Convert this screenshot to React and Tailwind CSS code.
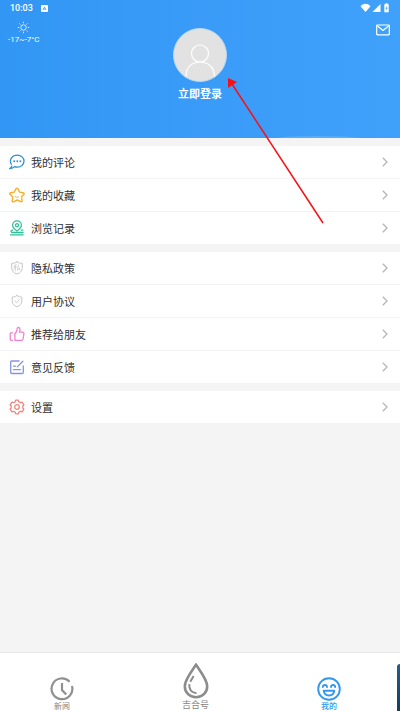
const menuGroups = [
    [
        { id: "comments", label: "我的评论", icon: CommentIcon },
        { id: "favorites", label: "我的收藏", icon: StarIcon },
        { id: "history", label: "浏览记录", icon: HistoryIcon },
    ],
    [
        { id: "privacy", label: "隐私政策", icon: PrivacyIcon },
        { id: "agreement", label: "用户协议", icon: AgreementIcon },
        { id: "recommend", label: "推荐给朋友", icon: ThumbIcon },
        { id: "feedback", label: "意见反馈", icon: FeedbackIcon },
    ],
    [{ id: "settings", label: "设置", icon: SettingsIcon }],
];

function CommentIcon() {
    return (
        <svg width="16" height="16" viewBox="0 0 16 16" fill="none" stroke="#2f8fd0" strokeWidth="1.300" strokeLinecap="round">
            <path d="M2.300 10.200C-.2 5.400 3.300 1.200 8.300 1.200c3.800 0 6.700 2.500 6.700 5.900s-2.900 6-6.700 6c-1 0-1.900-.2-2.700-.5C4.300 13.900 2.600 14.500 1 14.600c.9-.8 1.500-1.600 1.800-2.500" />
            <path d="M5.200 7.200h.01M8.300 7.200h.01M11.400 7.200h.01" strokeWidth="1.900" />
        </svg>
    );
}

function StarIcon() {
    return (
        <svg width="16" height="16" viewBox="0 0 16 16" fill="none" stroke="#f9ae2b" strokeWidth="1.400" strokeLinecap="round" strokeLinejoin="round">
            <path d="M12.700 11.200l.4 2.500c.1.900-.5 1.300-1.200 1L8.200 13l-3.700 1.800c-.9.300-1.400-.2-1.300-1l.6-3.800L1 7.300c-.5-.7-.3-1.300.5-1.500l3.700-.7 1.900-3.400c.5-.8 1.300-.8 1.700 0l1.800 3.400 3.700.7c.9.200 1.100.9.600 1.500L12.600 9.700" />
            <path d="M6 9.300c.8 1.200 2.300 1.400 3.500.6" strokeWidth="1" />
        </svg>
    );
}

function HistoryIcon() {
    return (
        <svg width="16" height="16" viewBox="0 0 16 16" fill="none" stroke="#31bd98" strokeWidth="1.300" strokeLinecap="round">
            <path d="M8 11C5 8.800 3.600 7.300 3.600 5.300a4.400 4.400 0 0 1 8.800 0C12.400 7.300 11 8.800 8 11z" />
            <circle cx="8" cy="5.200" r="1.500" />
            <path d="M3.800 10.100c-1 0-1.800.4-1.800 1.200s.8 1.200 1.800 1.200H14M1.500 14.800h12.600" />
            <path d="M12.200 10.200h1.600" />
        </svg>
    );
}

function PrivacyIcon() {
    return (
        <svg width="16" height="16" viewBox="0 0 16 16" fill="none" stroke="#c6c6c6" strokeWidth="1" strokeLinecap="round">
            <path d="M8 1.800c1.600 1.200 3.300 1.600 5.300 1.500v4.400c0 3.200-2 5.300-5.300 6.400-3.300-1.100-5.300-3.200-5.300-6.400V3.300c2 .1 3.700-.3 5.300-1.500z" />
            <path d="M7.400 4.800l-2 .6M4.900 6.900h2.600M6.300 5.300v5.700M6.200 7.300L4.900 9.200M9.500 5L8.400 9.900l2.200-.4M10 7.600l.8 2.200" strokeWidth=".7" />
        </svg>
    );
}

function AgreementIcon() {
    return (
        <svg width="16" height="16" viewBox="0 0 16 16" fill="none" stroke="#c9c9c9" strokeWidth="1" strokeLinecap="round" strokeLinejoin="round">
            <path d="M8 2.500c1.500 1.100 3 1.500 4.800 1.500v4c0 2.900-1.800 4.800-4.800 5.700C5 12.800 3.200 10.900 3.200 8V4C5 4 6.500 3.600 8 2.500z" />
            <path d="M5.900 8.200l1.600 1.500 2.800-3" />
        </svg>
    );
}

function ThumbIcon() {
    return (
        <svg width="16" height="16" viewBox="0 0 16 16" fill="none" stroke="#f57fd0" strokeWidth="1.300" strokeLinecap="round" strokeLinejoin="round">
            <path d="M3.600 6.800H2.200c-.6 0-1 .4-1 1v5.500c0 .6.4 1 1 1h1.400" />
            <path d="M5.900 14.300V7.600c1.400-.9 2.200-2.400 2.200-4.600 0-2.200 2.900-2 2.900.5 0 .9-.2 1.800-.5 2.700h3c1 0 1.600.7 1.400 1.700l-.9 5c-.2.900-.8 1.400-1.600 1.400H5.900" />
        </svg>
    );
}

function FeedbackIcon() {
    return (
        <svg width="16" height="16" viewBox="0 0 16 16" fill="none" stroke="#8794dc" strokeWidth="1.300" strokeLinecap="round" strokeLinejoin="round">
            <path d="M10 2H2.700c-.6 0-1 .4-1 1v10.500c0 .6.4 1 1 1h10.600c.6 0 1-.4 1-1V7" />
            <path d="M13.900 2.200L8.300 7.900M4.500 7.200h2M4.500 10.700h7" />
        </svg>
    );
}

function SettingsIcon() {
    return (
        <svg width="16" height="16" viewBox="0 0 16 16" fill="none" stroke="#f1857d" strokeWidth="1.300" strokeLinejoin="round">
            <path d="M6.300 2.700l.4-1.500h2.600l.4 1.500 1.700 1 1.600-.5 1.900 2.600L13.800 7v2l1.100 1.200-1.900 2.600-1.600-.5-1.700 1-.4 1.500H6.700l-.4-1.500-1.700-1-1.600.5-1.900-2.600L2.200 9V7L1.100 5.800 3 3.200l1.600.5z" />
            <circle cx="8" cy="8" r="2.300" />
        </svg>
    );
}

function StatusBar() {
    return (
        <div className="flex h-4 items-center justify-between px-[10px]">
            <div className="flex items-center gap-2">
                <span className="font-[Roboto,sans-serif] text-[9px] font-medium leading-4">
                    10:03
                </span>
                <svg width="7" height="7" viewBox="0 0 7 7">
                    <rect width="7" height="7" rx="1" fill="#fff" />
                    <path d="M2 5l1.500-3L5 5M2.500 4h2" fill="none" stroke="#3b98f2" strokeWidth=".8" />
                </svg>
            </div>
            <svg width="30" height="10" viewBox="0 0 30 10" fill="#fff">
                <path d="M.5 3.200C3.400-.1 7.600-.1 10.500 3.200L5.500 9z" />
                <path d="M20.500 1v8h-8z" />
                <path fillRule="evenodd" d="M25.500.2h2v1h1.200v8h-4.400v-8h1.200zM27 3l-1.700 2.600h1L26 7.600l1.700-2.800h-1z" />
            </svg>
        </div>
    );
}

function ProfileHeader() {
    return (
        <header className="relative h-[138px] overflow-hidden bg-linear-to-r from-[#3296f4] to-[#40a1fb] text-white">
            <StatusBar />
            <div className="grid grid-cols-3 items-start">
                <div className="flex flex-col items-start pl-2 pt-[5px]">
                    <svg className="ml-[9px]" width="13" height="13" viewBox="0 0 13 13" fill="none" stroke="#d6ebff" strokeWidth="1">
                        <circle cx="6.500" cy="6.500" r="2.700" />
                        <path d="M6.500.8v1.500M6.500 10.700v1.500M.8 6.500h1.500M10.700 6.500h1.500M2.500 2.500l1 1M9.500 9.500l1 1M10.500 2.500l-1 1M3.500 9.500l-1 1" />
                    </svg>
                    <span className="font-[Roboto,sans-serif] text-[8px] leading-3">
                        -17~-7°C
                    </span>
                </div>
                <button type="button" className="flex flex-col items-center pt-3">
                    <svg width="54" height="54" viewBox="0 0 54 54" fill="none" stroke="#fff" strokeWidth="1.200">
                        <circle cx="27" cy="27" r="26.500" fill="#e2e2e2" stroke="#b9d6f0" strokeWidth="1" />
                        <circle cx="27" cy="25.500" r="8.500" />
                        <path d="M13 48.500C13 39 19 34 27 34s14.500 5 14.500 14.500" />
                    </svg>
                    <span className="text-[11px] font-bold leading-[22px]">立即登录</span>
                </button>
                <button type="button" aria-label="消息" className="justify-self-end pr-[10px] pt-2">
                    <svg width="14" height="12" viewBox="0 0 14 12" fill="none" stroke="#fff" strokeWidth="1.200" strokeLinejoin="round">
                        <rect x=".7" y="1" width="12.600" height="9.800" rx=".5" />
                        <path d="M1.500 2L7 6.500 12.500 2" />
                    </svg>
                </button>
            </div>
            <div className="absolute -bottom-[6px] left-[67%] h-2 w-1/4 rounded-[50%] bg-white/15" />
        </header>
    );
}

function MenuRow({ item }) {
    const Icon = item.icon;

    return (
        <li>
            <a href={`#${item.id}`} className="flex h-8 items-center gap-[6px] pl-[9px] pr-3">
                <Icon />
                <span className="flex-1 text-[11px] leading-4 text-[#303030]">
                    {item.label}
                </span>
                <svg width="6" height="10" viewBox="0 0 6 10" fill="none" stroke="#b5b5b5" strokeWidth="1.300">
                    <path d="M.8.800L5 5 .8 9.200" />
                </svg>
            </a>
        </li>
    );
}

function TabBar() {
    return (
        <nav className="relative flex h-[59px] items-end justify-between overflow-hidden border-t border-[#e6e6e6] bg-white pl-[22px] pr-[31px] text-[#858585]">
            <a href="#news" className="flex w-20 flex-col items-center">
                <svg width="24" height="24" viewBox="0 0 24 24" fill="none" stroke="#909090" strokeWidth="2.200">
                    <path d="M19.600 4.700A10.400 10.400 0 1 0 22 9" />
                    <path d="M12 6v7l4.200 4.500" />
                </svg>
                <span className="text-[8px] leading-[10px]">新闻</span>
            </a>
            <a href="#jihe" className="flex w-20 flex-col items-center">
                <svg width="26" height="36" viewBox="0 0 26 36" fill="none" stroke="#8c8c8c" strokeWidth="2.600">
                    <path d="M13 1.800C8.500 8.500 1.800 17 1.800 23.200 1.800 29.800 6.800 34.200 13 34.200s11.200-4.400 11.200-11C24.200 17 17.500 8.500 13 1.800z" />
                    <path d="M10.600 13L7.300 18.800M6.300 21.200c-.4 5.200 2.200 8.500 7.200 9" strokeWidth="2" />
                </svg>
                <span className="text-[9px] leading-3">吉合号</span>
            </a>
            <a href="#mine" aria-current="page" className="flex w-20 flex-col items-center text-[#3298ee]">
                <svg width="24" height="24" viewBox="0 0 24 24" fill="none" stroke="#3298ee" strokeWidth="1.900" strokeLinecap="round" strokeLinejoin="round">
                    <circle cx="12" cy="12" r="10.800" />
                    <path d="M5.800 10c.3-2.700 3.900-2.700 4.200 0M14 10c.3-2.700 3.900-2.700 4.200 0" />
                    <path d="M6.700 13.700h10.600c-.4 3.100-2.400 4.800-5.300 4.800s-4.900-1.700-5.300-4.800z" />
                </svg>
                <span className="text-[8px] font-medium leading-[10px]">我的</span>
            </a>
            {/* edge of the floating widget */}
            <div className="absolute bottom-0 right-0 h-[47px] w-[3px] rounded-tl-[3px] bg-linear-to-b from-[#245f8c] to-[#123f63]" />
        </nav>
    );
}

// red pointer to the login entry
function LoginPointer() {
    return (
        <svg className="pointer-events-none absolute left-[57%] top-[78px]" width="97" height="147" viewBox="0 0 97 147">
            <path d="M4 6L95 145" stroke="#fb0f14" strokeWidth="1.500" />
            <path d="M0 0L9 4 0 10z" fill="#fb0f14" />
        </svg>
    );
}

export default function App() {
    return (
        <div className="relative flex min-h-screen flex-col bg-[#f4f4f4] font-['Noto_Sans_CJK_SC',sans-serif]">
            <ProfileHeader />
            <main className="flex flex-1 flex-col gap-2 pt-2">
                {menuGroups.map((group) => (
                    <ul key={group[0].id} className="divide-y divide-[#f3f3f3] bg-white">
                        {group.map((item) => (
                            <MenuRow key={item.id} item={item} />
                        ))}
                    </ul>
                ))}
            </main>
            <TabBar />
            <LoginPointer />
        </div>
    );
}
